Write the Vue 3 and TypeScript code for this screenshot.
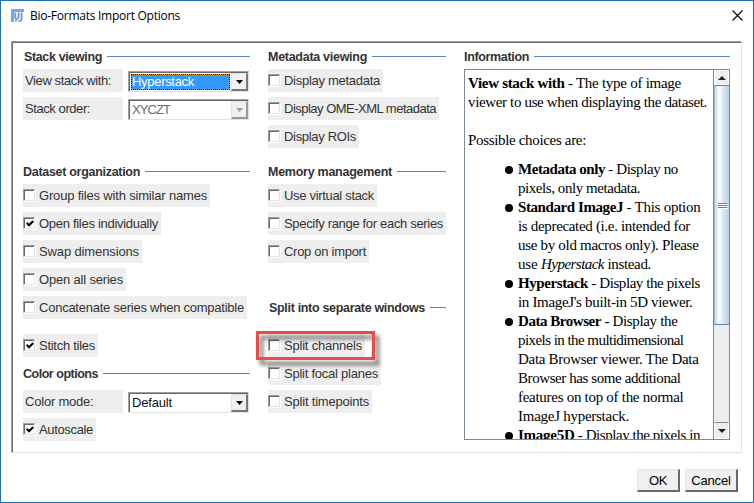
<script setup lang="ts">
interface Option { label: string; width: number; checked?: boolean }
interface Segment { text: string; width: number; kind?: 'b' | 'i' }

// Spreads the letters of a label over a fixed advance width.
const fit = (el: HTMLElement, width: number) => {
  el.style.letterSpacing = '0px'
  const count = (el.textContent ?? '').length
  const natural = el.getBoundingClientRect().width
  el.style.letterSpacing = `${(width - natural) / count}px`
}
const vFit = { mounted: (el: HTMLElement, binding: { value: number }) => fit(el, binding.value) }

const dataset: Option[] = [
  { label: 'Group files with similar names', width: 187 },
  { label: 'Open files individually', width: 138, checked: true },
  { label: 'Swap dimensions', width: 119 },
  { label: 'Open all series', width: 103 },
  { label: 'Concatenate series when compatible', width: 224 },
]
const metadata: Option[] = [
  { label: 'Display metadata', width: 115 },
  { label: 'Display OME-XML metadata', width: 171 },
  { label: 'Display ROIs', width: 91 },
]
const memory: Option[] = [
  { label: 'Use virtual stack', width: 109 },
  { label: 'Specify range for each series', width: 178 },
  { label: 'Crop on import', width: 101 },
]
const split: Option[] = [
  { label: 'Split channels', width: 97 },
  { label: 'Split focal planes', width: 113 },
  { label: 'Split timepoints', width: 104 },
]
const stitch: Option[] = [{ label: 'Stitch tiles', width: 75, checked: true }]
const autoscale: Option[] = [{ label: 'Autoscale', width: 73, checked: true }]

const intro: Segment[][] = [
  [{ text: 'View stack with', width: 96.5, kind: 'b' }, { text: ' - The type of image', width: 116.5 }],
  [{ text: 'viewer to use when displaying the dataset.', width: 239 }],
  [],
  [{ text: 'Possible choices are:', width: 118 }],
]
const choices: Segment[][][] = [
  [
    [{ text: 'Metadata only', width: 87, kind: 'b' }, { text: ' - Display no', width: 73 }],
    [{ text: 'pixels, only metadata.', width: 122 }],
  ],
  [
    [{ text: 'Standard ImageJ', width: 105, kind: 'b' }, { text: ' - This option', width: 77.5 }],
    [{ text: 'is deprecated (i.e. intended for', width: 172 }],
    [{ text: 'use by old macros only). Please', width: 180.5 }],
    [{ text: 'use ', width: 23 }, { text: 'Hyperstack', width: 63, kind: 'i' }, { text: ' instead.', width: 47 }],
  ],
  [
    [{ text: 'Hyperstack', width: 70, kind: 'b' }, { text: ' - Display the pixels', width: 112 }],
    [{ text: "in ImageJ's built-in 5D viewer.", width: 174.5 }],
  ],
  [
    [{ text: 'Data Browser', width: 83, kind: 'b' }, { text: ' - Display the', width: 76.5 }],
    [{ text: 'pixels in the multidimensional', width: 165.5 }],
    [{ text: 'Data Browser viewer. The Data', width: 180.5 }],
    [{ text: 'Browser has some additional', width: 162.5 }],
    [{ text: 'features on top of the normal', width: 165.5 }],
    [{ text: 'ImageJ hyperstack.', width: 111 }],
  ],
  [[{ text: 'Image5D', width: 56.5, kind: 'b' }, { text: ' - Display the pixels in', width: 125.5 }]],
]
</script>

<template>
  <div class="window">
    <header class="titlebar">
      <svg class="logo" width="15" height="15" viewBox="0 0 15 15">
        <path d="M1 14V1H14V4H4V14Z" fill="#5b9bdc" opacity=".85" />
        <path d="M5.2 4.5V9.5Q5.2 11 7 10.8Q8.6 10.6 8.6 9V4.5M11.6 4.5V10.5Q11.6 13.2 8.5 13" fill="none" stroke="#6b9fd4" stroke-width="1.9" />
        <path d="M5 12.8h2" stroke="#9a948c" stroke-width="1.4" />
      </svg>
      <span class="title"><span v-fit="150">Bio-Formats Import Options</span></span>
      <svg class="close" width="11" height="11" viewBox="0 0 11 11"><path d="M.5 .5L10.5 10.5M10.5 .5L.5 10.5" stroke="#000" stroke-width="1.1" /></svg>
    </header>

    <main class="panel">
      <section class="col first">
        <h2 class="nudged"><span v-fit="78">Stack viewing</span><i /></h2>
        <div class="row">
          <div class="label"><span v-fit="86">View stack with:</span></div>
          <div class="combo">
            <div class="value selected"><span v-fit="62">Hyperstack</span></div>
            <div class="arrow"><svg width="7" height="4" viewBox="0 0 7 4"><path d="M0 0H7L3.5 4Z" fill="#000" /></svg></div>
          </div>
        </div>
        <div class="row">
          <div class="label"><span v-fit="65">Stack order:</span></div>
          <div class="combo disabled">
            <div class="value"><span v-fit="38">XYCZT</span></div>
            <div class="arrow"><svg width="7" height="4" viewBox="0 0 7 4"><path d="M0 0H7L3.5 4Z" fill="#a0a0a0" /></svg></div>
          </div>
        </div>
        <h2 class="after-stack"><span v-fit="117">Dataset organization</span><i /></h2>
        <div v-for="o in dataset" :key="o.label" class="option" :style="{ width: o.width + 'px' }">
          <span class="box"><svg v-if="o.checked" width="8" height="8" viewBox="0 0 8 8"><path d="M.7 2.8L3 5.2L7.3 1" fill="none" stroke="#000" stroke-width="2.1" /></svg></span>
          <span v-fit="o.width - 19">{{ o.label }}</span>
        </div>
        <div v-for="o in stitch" :key="o.label" class="option stitch" :style="{ width: o.width + 'px' }">
          <span class="box"><svg width="8" height="8" viewBox="0 0 8 8"><path d="M.7 2.8L3 5.2L7.3 1" fill="none" stroke="#000" stroke-width="2.1" /></svg></span>
          <span v-fit="o.width - 19">{{ o.label }}</span>
        </div>
        <h2 class="color-title"><span v-fit="75">Color options</span><i /></h2>
        <div class="row">
          <div class="label"><span v-fit="68.5">Color mode:</span></div>
          <div class="combo">
            <div class="value"><span v-fit="40">Default</span></div>
            <div class="arrow"><svg width="7" height="4" viewBox="0 0 7 4"><path d="M0 0H7L3.5 4Z" fill="#000" /></svg></div>
          </div>
        </div>
        <div v-for="o in autoscale" :key="o.label" class="option" :style="{ width: o.width + 'px' }">
          <span class="box"><svg width="8" height="8" viewBox="0 0 8 8"><path d="M.7 2.8L3 5.2L7.3 1" fill="none" stroke="#000" stroke-width="2.1" /></svg></span>
          <span v-fit="o.width - 19">{{ o.label }}</span>
        </div>
      </section>

      <section class="col second">
        <h2><span v-fit="99">Metadata viewing</span><i /></h2>
        <div v-for="o in metadata" :key="o.label" class="option" :style="{ width: o.width + 'px' }">
          <span class="box" /><span v-fit="o.width - 19">{{ o.label }}</span>
        </div>
        <h2 class="after-meta"><span v-fit="124">Memory management</span><i /></h2>
        <div v-for="o in memory" :key="o.label" class="option" :style="{ width: o.width + 'px' }">
          <span class="box" /><span v-fit="o.width - 19">{{ o.label }}</span>
        </div>
        <h2 class="split-title"><span v-fit="156">Split into separate windows</span><i /></h2>
        <div class="split-list">
          <div v-for="o in split" :key="o.label" class="option" :style="{ width: o.width + 'px' }">
            <span class="box" /><span v-fit="o.width - 19">{{ o.label }}</span>
          </div>
          <div class="highlight" />
        </div>
      </section>

      <section class="col third">
        <h2><span v-fit="65">Information</span><i /></h2>
        <div class="pane">
          <div class="doc">
            <p v-for="(line, n) in intro" :key="n" class="line"><span v-for="s in line" :key="s.text" v-fit="s.width" :class="s.kind">{{ s.text }}</span></p>
            <ul>
              <li v-for="(choice, n) in choices" :key="n">
                <p v-for="(line, k) in choice" :key="k" class="line"><span v-for="s in line" :key="s.text" v-fit="s.width" :class="s.kind">{{ s.text }}</span></p>
              </li>
            </ul>
          </div>
          <div class="scrollbar">
            <div class="step"><svg width="8" height="4" viewBox="0 0 8 4"><path d="M0 4L4 0L8 4Z" fill="#222" /></svg></div>
            <div class="thumb"><b /><b /><b /></div>
            <div class="track" />
            <div class="step down"><svg width="8" height="4" viewBox="0 0 8 4"><path d="M0 0L4 4L8 0Z" fill="#222" /></svg></div>
          </div>
        </div>
      </section>
    </main>

    <footer class="buttons">
      <button type="button" class="ok"><span v-fit="18">OK</span></button>
      <button type="button" class="cancel"><span v-fit="39.5">Cancel</span></button>
    </footer>
  </div>
</template>

<style>
body { margin: 0; background: #fff; }
</style>

<style scoped>
* { box-sizing: border-box; }
.window { width: 754px; height: 503px; border: 1px solid #1a6fb5; background: #fff; display: flex; flex-direction: column; overflow: hidden; font: 13px/23px "Liberation Sans", Arial, sans-serif; color: #333; }
.titlebar { height: 40px; flex: none; display: flex; align-items: flex-start; padding: 7px 10px 0 9px; }
.logo { flex: none; }
.title { font: 12px/16px "Open Sans", "Noto Sans", sans-serif; color: #000; margin-left: 5px; white-space: nowrap; flex: 1; }
.close { margin-top: 2px; flex: none; }
.panel { margin-left: 10px; width: 731px; height: 412px; flex: none; display: flex; align-items: flex-start; background: #fff; border: 1px solid #a0a0a0; border-right-color: #e3e3e3; border-bottom-color: #e3e3e3; box-shadow: inset 1px 1px #696969; padding: 1px 0 0 11px; }
.col { display: flex; flex-direction: column; align-items: flex-start; padding-top: 5px; flex: none; }
.first { width: 227px; margin-right: 18px; }
.second { width: 178px; margin-right: 18px; }
.third { width: 266px; }
h2 { margin: 0 0 4px; height: 17px; width: 100%; display: flex; align-items: center; gap: 5px; font-size: 12.5px; font-weight: bold; line-height: 17px; white-space: nowrap; }
h2 i { height: 1px; flex: 1; background: #6382bf; }
h2 span { flex: none; padding-top: 2px; }
h2.nudged { padding-left: 1px; }
.row { display: flex; height: 23px; margin-bottom: 5px; flex: none; }
.label { width: 100px; padding-left: 2px; background: #eee; margin-right: 5px; white-space: nowrap; }
.combo { width: 121px; height: 21px; margin-top: 2px; display: flex; border: 1px solid #a0a0a0; border-right-color: #e3e3e3; border-bottom-color: #e3e3e3; box-shadow: inset 1px 1px #696969; padding: 1px 0 0 1px; }
.value { width: 101px; padding-left: 2px; line-height: 18px; color: #111; white-space: nowrap; }
.selected { width: 99px; height: 16px; margin: 1px 1px 0; padding-left: 0; line-height: 14px; color: #fff; border: 1px dotted #1b1100; background: linear-gradient(#39f, #39f) padding-box, linear-gradient(#e08a20, #e08a20) border-box; }
.disabled .value { color: #6d6d6d; }
.arrow { width: 17px; height: 18px; background: #f0f0f0; border: 1px solid #e3e3e3; border-right: 2px solid #777; border-bottom: 2px solid #777; display: flex; align-items: center; justify-content: center; }
.disabled .arrow { border-right-color: #999; border-bottom-color: #999; }
.option { height: 23px; flex: none; background: #eee; display: flex; align-items: center; gap: 4px; white-space: nowrap; margin-bottom: 5px; line-height: 23px; }
.option > span { flex: none; }
.box { width: 12px; height: 12px; margin-top: -1px; background: #fff; border: 1px solid #a0a0a0; border-right-color: #e3e3e3; border-bottom-color: #e3e3e3; box-shadow: inset 1px 1px #696969, 1px 1px #fff; display: flex; align-items: center; justify-content: center; padding: 1px 0 0 1px; }
.box svg { flex: none; }
.after-stack { margin-top: 38px; }
.after-meta { margin-top: 10px; }
.stitch { margin-top: 10px; }
.color-title { margin-top: 3px; margin-bottom: 8px; }
.split-title { margin-top: 31px; margin-bottom: 18px; padding-left: 1px; }
.split-list { position: relative; }
.highlight { position: absolute; left: -12px; top: -3px; width: 119px; height: 29px; border: 3px solid #e84c45; filter: drop-shadow(4px 5px 2px rgba(0, 0, 0, .6)); }
.pane { width: 266px; height: 371px; display: flex; border: 1px solid #7a8a99; overflow: hidden; }
.doc { width: 248px; height: 369px; flex: none; overflow: hidden; padding: 4px 0 0 3px; font: 15px/19px "Liberation Serif", "Times New Roman", serif; color: #000; }
.line { margin: 0; height: 19px; white-space: pre; }
.b { font-weight: bold; }
.i { font-style: italic; }
ul { list-style: none; margin: 10px 0 0; padding: 0; }
li { display: grid; grid-template-columns: 13px 1fr; padding-left: 37px; }
li::before { content: ""; width: 8px; height: 8px; border-radius: 50%; background: #000; margin-top: 6px; grid-row: 1; }
li .line { grid-column: 2; }
.scrollbar { width: 16px; flex: none; display: flex; flex-direction: column; border-left: 1px solid #7a8a99; background: #eee; }
.step { height: 15px; flex: none; display: flex; align-items: center; justify-content: center; border: 1px solid #fff; background: #eee; }
.down { border-top: 1px solid #7a8a99; height: 17px; }
.thumb { height: 240px; flex: none; border-top: 1px solid #6382bf; border-bottom: 1px solid #6382bf; border-left: 1px solid #a3b8cc; background: linear-gradient(90deg, #c8daee 0%, #fff 30%, #dfe9f4 55%, #b8cfe5 100%); display: flex; flex-direction: column; align-items: center; justify-content: center; gap: 1px; }
.thumb b { width: 9px; height: 1px; background: #6382bf; box-shadow: 1px 1px #fff; }
.track { flex: 1; background: #eee; }
.buttons { display: flex; justify-content: flex-end; gap: 5px; padding: 16px 15px 0 0; }
button { height: 23px; padding: 0; background: #f0f0f0; border: 1px solid #e3e3e3; border-right: 2px solid #696969; border-bottom: 2px solid #696969; font: 13px/19px "Liberation Sans", Arial, sans-serif; color: #000; }
.ok { width: 43px; }
.cancel { width: 53px; }
</style>
